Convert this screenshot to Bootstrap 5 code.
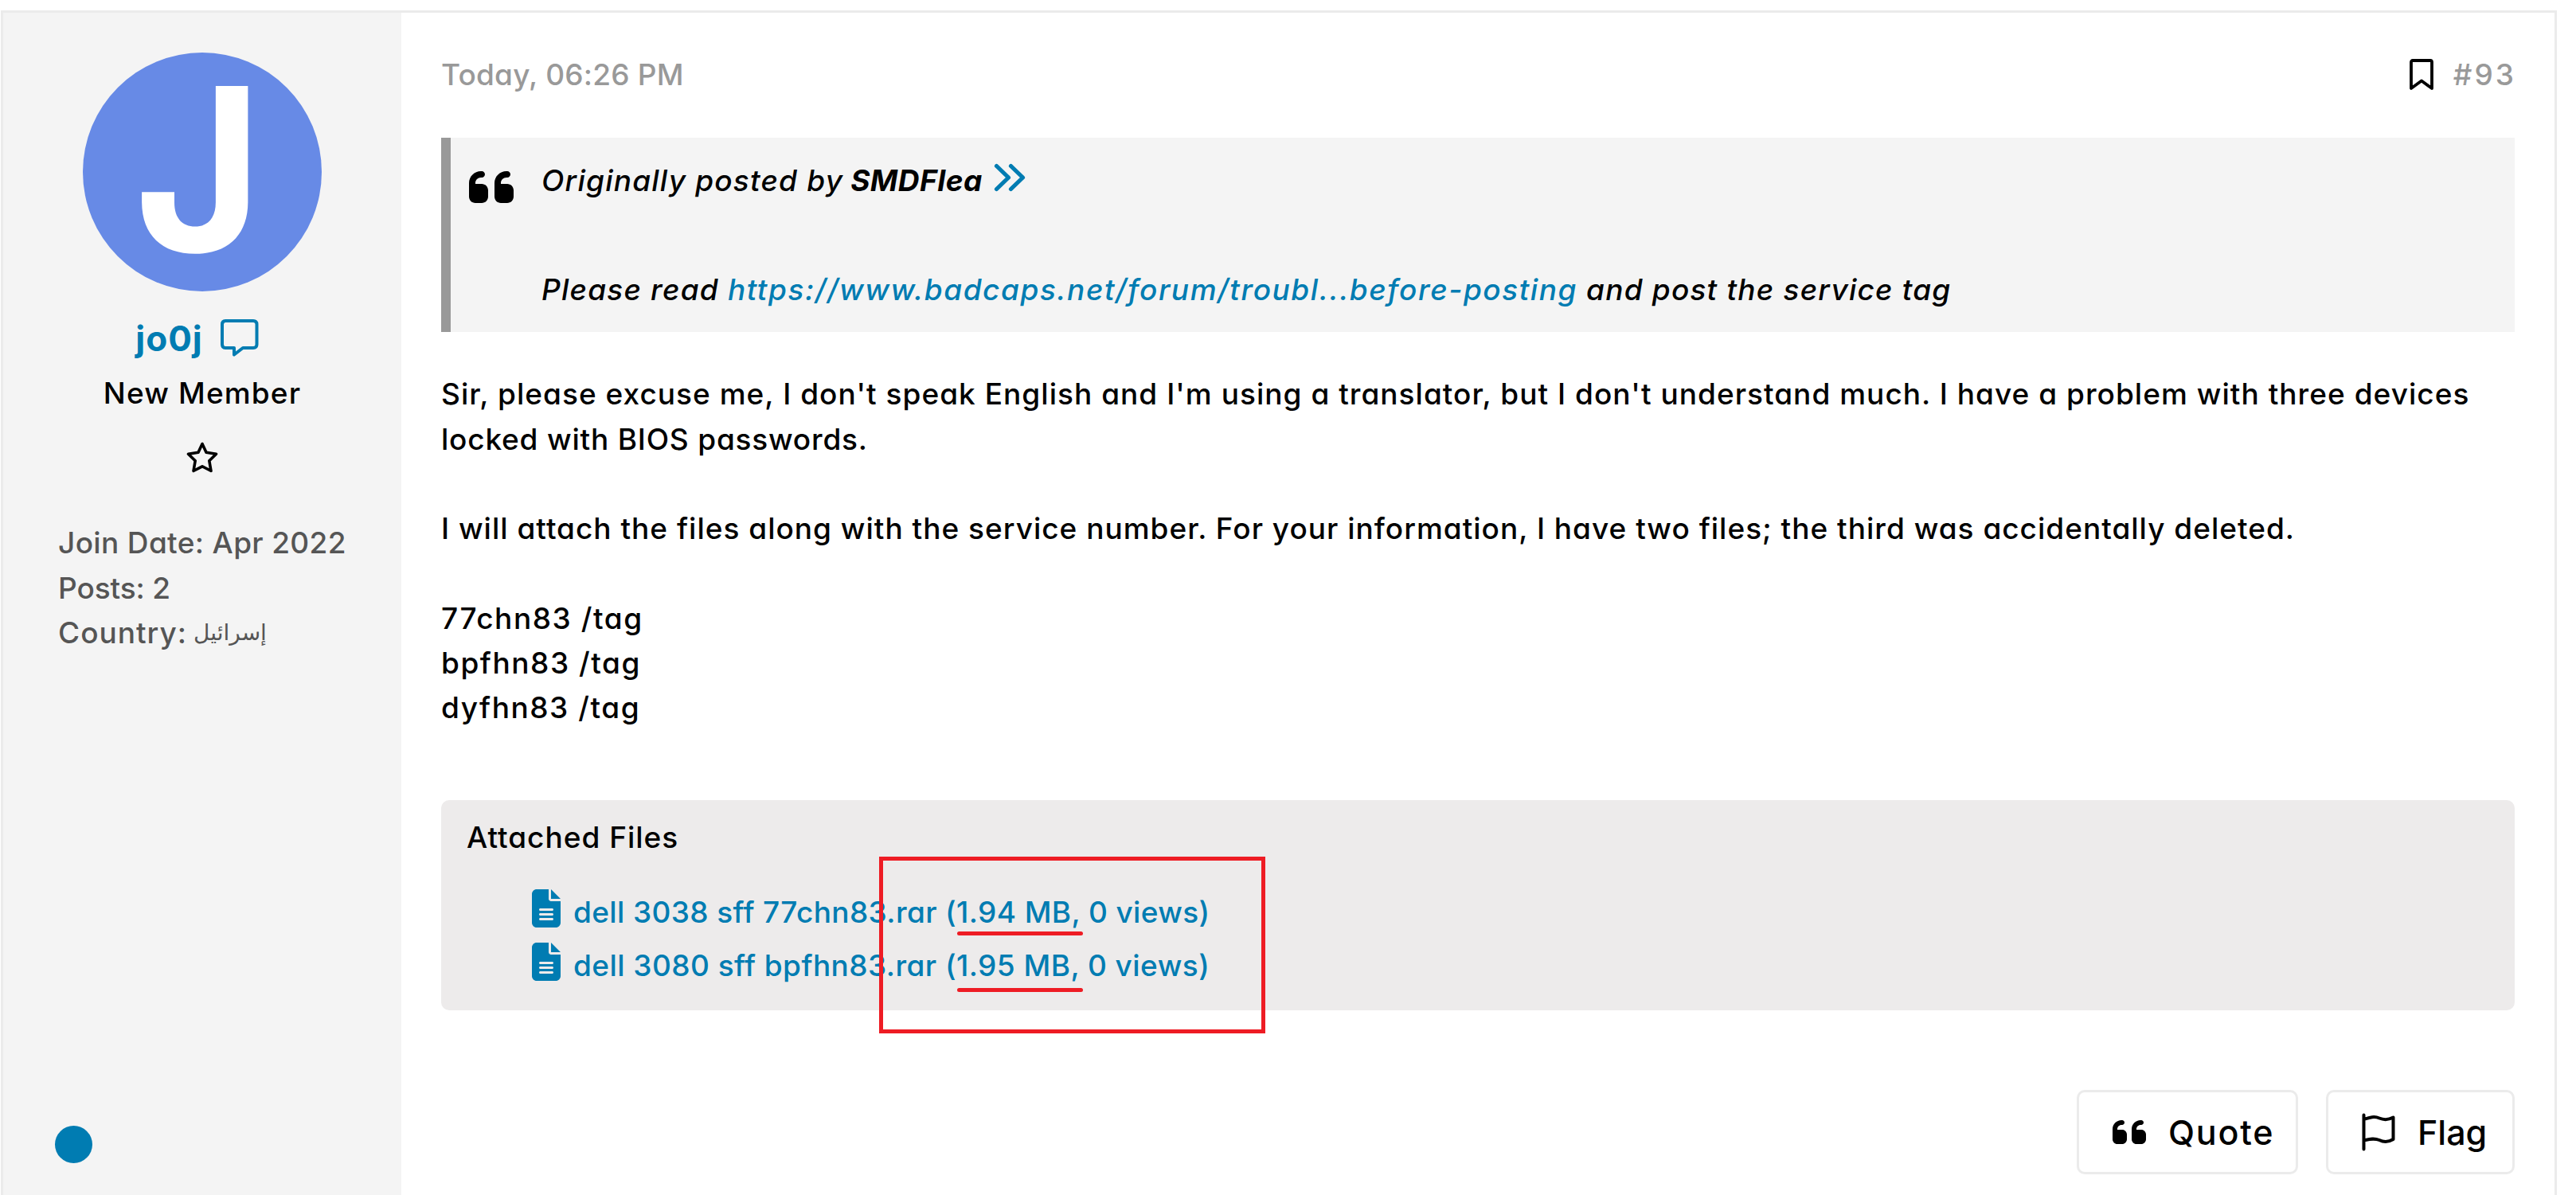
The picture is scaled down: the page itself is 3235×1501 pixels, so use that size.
<!DOCTYPE html>
<html lang="en">
<head>
  <meta charset="UTF-8">
  <title>Forum Post #93</title>
  <meta name="viewport" content="width=device-width, initial-scale=1">
  <link href="https://cdn.jsdelivr.net/npm/bootstrap@5.3.3/dist/css/bootstrap.min.css" rel="stylesheet">
  <style>
    body {
      font-family: Inter, "DejaVu Sans", sans-serif;
      font-feature-settings: "cv11";
      font-weight: 500;
      font-size: 37px;
      line-height: 56.25px;
      letter-spacing: 1px;
      color: #000;
      background: #fff;
      padding: 13px 24px 0 1px;
      height: 1501px;
      overflow: hidden;
    }
    a {
      color: #007cb2;
      text-decoration: none;
    }
    svg {
      display: block;
      flex-shrink: 0;
    }
    .post {
      border: 3px solid #ebebeb;
      border-bottom: 0;
      height: 1488px;
    }
    .post-user {
      width: 500px;
      background: #f4f4f4;
      padding: 50px 0 40px;
    }
    .user-name {
      font-size: 44px;
      font-weight: 700;
      line-height: 66px;
      margin-top: 26px;
      padding-right: 13px;
      gap: 22px;
    }
    .user-title {
      margin-top: 8px;
      letter-spacing: 1.15px;
    }
    .user-rank {
      margin-top: 33px;
    }
    .user-info {
      color: #555;
      margin-top: 59px;
      padding-left: 69px;
    }
    .user-info .arabic {
      font-family: "DejaVu Sans", sans-serif;
      font-weight: 400;
      font-size: 28px;
      letter-spacing: 0;
      line-height: 1;
    }
    .online-dot {
      width: 47px;
      height: 47px;
      margin-left: 65px;
      border-radius: 50%;
      background: #007cb2;
    }
    .post-main {
      padding: 50px 50px 0;
    }
    .post-date {
      color: #999;
      letter-spacing: .2px;
    }
    .post-number {
      letter-spacing: 3px;
      margin-left: 25px;
      margin-right: -2px;
    }
    .post-quote {
      margin-top: 51px;
      height: 244px;
      padding: 26px 0 0 23px;
      border-left: 12px solid #999;
      background: #f4f4f4;
      font-style: italic;
      letter-spacing: 1.2px;
    }
    .quote-body {
      margin-left: 35px;
    }
    .quote-text {
      margin-top: 80px;
    }
    .post-text {
      margin-top: 50px;
      letter-spacing: 1.03px;
    }
    .post-text p {
      margin-bottom: 56.25px;
    }
    .attachments {
      margin-top: 88px;
      height: 264px;
      padding: 19px 32px 0;
      border-radius: 10px;
      background: #edebeb;
    }
    .attachments ul {
      margin-top: 31px;
      padding-left: 82px;
      letter-spacing: .37px;
    }
    .attachments li {
      height: 67px;
      line-height: 67px;
      gap: 16px;
    }
    .attachments li svg {
      margin-bottom: 8px;
    }
    .post-buttons {
      margin-top: 100px;
      gap: 35px;
    }
    .post-buttons .btn {
      --bs-btn-font-size: 43px;
      --bs-btn-font-weight: 500;
      --bs-btn-color: #000;
      --bs-btn-bg: #fff;
      --bs-btn-border-color: #ebebeb;
      --bs-btn-border-width: 3px;
      --bs-btn-border-radius: 10px;
      --bs-btn-padding-x: 0;
      --bs-btn-padding-y: 0;
      height: 106px;
      padding-left: 42px;
      gap: 28px;
    }
    .btn-quote {
      width: 278px;
      letter-spacing: 1.8px;
    }
    .btn-flag {
      width: 237px;
    }
    /* hand-drawn red marks over the attachment list */
    .red-box {
      position: absolute;
      left: 550px;
      top: 71px;
      width: 485px;
      height: 222px;
      border: 5px solid #ee1c24;
    }
    .red-line {
      position: absolute;
      left: 648px;
      width: 158px;
      height: 5px;
      border-radius: 3px;
      background: #ee1c24;
    }
    .red-line.first { top: 165px; }
    .red-line.second { top: 236px; }
  </style>
</head>
<body>

<svg width="0" height="0" class="position-absolute">
  <symbol id="icon-quote" viewBox="0 96 448 320">
    <path d="M0 216C0 149.700 53.700 96 120 96h8c17.700 0 32 14.300 32 32s-14.300 32-32 32h-8c-30.900 0-56 25.100-56 56v8h64c35.300 0 64 28.700 64 64v64c0 35.300-28.700 64-64 64H64c-35.300 0-64-28.700-64-64zM256 216c0-66.300 53.700-120 120-120h8c17.700 0 32 14.300 32 32s-14.300 32-32 32h-8c-30.900 0-56 25.100-56 56v8h64c35.300 0 64 28.700 64 64v64c0 35.300-28.700 64-64 64h-64c-35.300 0-64-28.700-64-64z"/>
  </symbol>
  <symbol id="icon-file" viewBox="0 0 384 512">
    <path d="M64 0C28.700 0 0 28.700 0 64V448c0 35.300 28.700 64 64 64H320c35.300 0 64-28.700 64-64V160H256c-17.700 0-32-14.300-32-32V0H64zM256 0V128H384L256 0zM112 256H272c8.800 0 16 7.200 16 16s-7.200 16-16 16H112c-8.800 0-16-7.200-16-16s7.200-16 16-16zm0 64H272c8.800 0 16 7.200 16 16s-7.200 16-16 16H112c-8.800 0-16-7.200-16-16s7.200-16 16-16zm0 64H272c8.800 0 16 7.200 16 16s-7.200 16-16 16H112c-8.800 0-16-7.200-16-16s7.200-16 16-16z"/>
  </symbol>
</svg>

<article class="post d-flex">
  <aside class="post-user d-flex flex-column flex-shrink-0">
    <svg class="mx-auto" width="300" height="300" viewBox="0 0 300 300">
      <circle cx="150" cy="150" r="150" fill="#678ae6"/>
      <text transform="translate(65 250) scale(.96 1)" font-size="286" font-weight="700" fill="#fff" letter-spacing="0">J</text>
    </svg>
    <div class="user-name d-flex justify-content-center align-items-center">
      <a href="#">jo0j</a>
      <a href="#" aria-label="Private message">
        <svg width="48" height="48" viewBox="0 0 48 48" fill="none" stroke="#007cb2" stroke-width="4" stroke-linejoin="round">
          <path d="M6 2H41Q45.500 2 45.500 6.500V31.500Q45.500 36 41 36H28L17 44.500V36H6Q2 36 2 31.500V6.500Q2 2 6 2Z"/>
        </svg>
      </a>
    </div>
    <div class="user-title text-center">New Member</div>
    <svg class="user-rank mx-auto" width="40" height="40" viewBox="0 0 40 40" fill="none" stroke="#000" stroke-width="3.600" stroke-linejoin="round">
      <path d="M20 2.500L25 13.300L37.500 15.200L28.800 23.800L31 36.500L20 30.800L9 36.500L11.200 23.800L2.500 15.200L15 13.300Z"/>
    </svg>
    <div class="user-info">
      <div style="letter-spacing:.35px">Join Date: Apr 2022</div>
      <div style="letter-spacing:-.1px">Posts: 2</div>
      <div class="d-flex align-items-center"><span>Country:</span><bdi class="arabic ms-2">إسرائيل</bdi></div>
    </div>
    <div class="online-dot mt-auto"></div>
  </aside>

  <section class="post-main flex-grow-1">
    <div class="post-date d-flex align-items-center">
      <span>Today, 06:26 PM</span>
      <svg class="ms-auto" width="30" height="40" viewBox="0 0 30 40" fill="none" stroke="#000" stroke-width="3.800" stroke-linejoin="round">
        <path d="M4 2H26Q28 2 28 4V37L15 27.500L2 37V4Q2 2 4 2Z"/>
      </svg>
      <span class="post-number">#93</span>
    </div>

    <div class="post-quote d-flex">
      <svg class="mt-3" width="56" height="40"><use href="#icon-quote"/></svg>
      <div class="quote-body">
        <div class="d-flex align-items-center">
          <span>Originally posted by</span>
          <b style="margin-left:9px;letter-spacing:.5px">SMDFlea</b>
          <a href="#" aria-label="View post">
            <svg width="40" height="36" viewBox="0 0 40 36" style="margin:0 0 9px 14px" fill="none" stroke="#007cb2" stroke-width="5.200" stroke-linecap="round" stroke-linejoin="round">
              <path d="M3.500 3.500L18.500 18L3.500 32.500M21.500 3.500L36.500 18L21.500 32.500"/>
            </svg>
          </a>
        </div>
        <div class="quote-text">Please read <a href="#" style="letter-spacing:1.540px">https://www.badcaps.net/forum/troubl...before-posting</a> and post the service tag</div>
      </div>
    </div>

    <div class="post-text">
      <p>Sir, please excuse me, I don't speak English and I'm using a translator, but I don't understand much. I have a problem with three devices<br>
      <span style="letter-spacing:.8px">locked with BIOS passwords.</span></p>
      <p style="letter-spacing:1px">I will attach the files along with the service number. For your information, I have two files; the third was accidentally deleted.</p>
      <p class="mb-0" style="letter-spacing:1.550px">77chn83 /tag<br>bpfhn83 /tag<br>dyfhn83 /tag</p>
    </div>

    <div class="attachments position-relative">
      <div>Attached Files</div>
      <ul class="list-unstyled mb-0">
        <li class="d-flex align-items-center">
          <svg width="36" height="48" fill="#007cb2"><use href="#icon-file"/></svg>
          <a href="#">dell 3038 sff 77chn83.rar (1.94 MB, 0 views)</a>
        </li>
        <li class="d-flex align-items-center">
          <svg width="36" height="48" fill="#007cb2"><use href="#icon-file"/></svg>
          <a href="#" style="letter-spacing:.440px">dell 3080 sff bpfhn83.rar (1.95 MB, 0 views)</a>
        </li>
      </ul>
      <div class="red-box"></div>
      <div class="red-line first"></div>
      <div class="red-line second"></div>
    </div>

    <div class="post-buttons d-flex justify-content-end">
      <button type="button" class="btn btn-quote d-flex align-items-center">
        <svg width="42" height="30"><use href="#icon-quote"/></svg>
        <span>Quote</span>
      </button>
      <button type="button" class="btn btn-flag d-flex align-items-center">
        <svg width="42" height="48" viewBox="0 0 42 48" fill="none" stroke="#000" stroke-width="4" stroke-linecap="round" stroke-linejoin="round">
          <path d="M2.500 2.500V45.500M2.500 8C9 6 15 3.500 22 6.500C29 9.500 34 8.500 39.500 5.500V33C33 37 27 36.500 22 34C15 31 9 33 2.500 34.500"/>
        </svg>
        <span>Flag</span>
      </button>
    </div>
  </section>
</article>

<script src="https://cdn.jsdelivr.net/npm/bootstrap@5.3.3/dist/js/bootstrap.bundle.min.js"></script>
</body>
</html>
